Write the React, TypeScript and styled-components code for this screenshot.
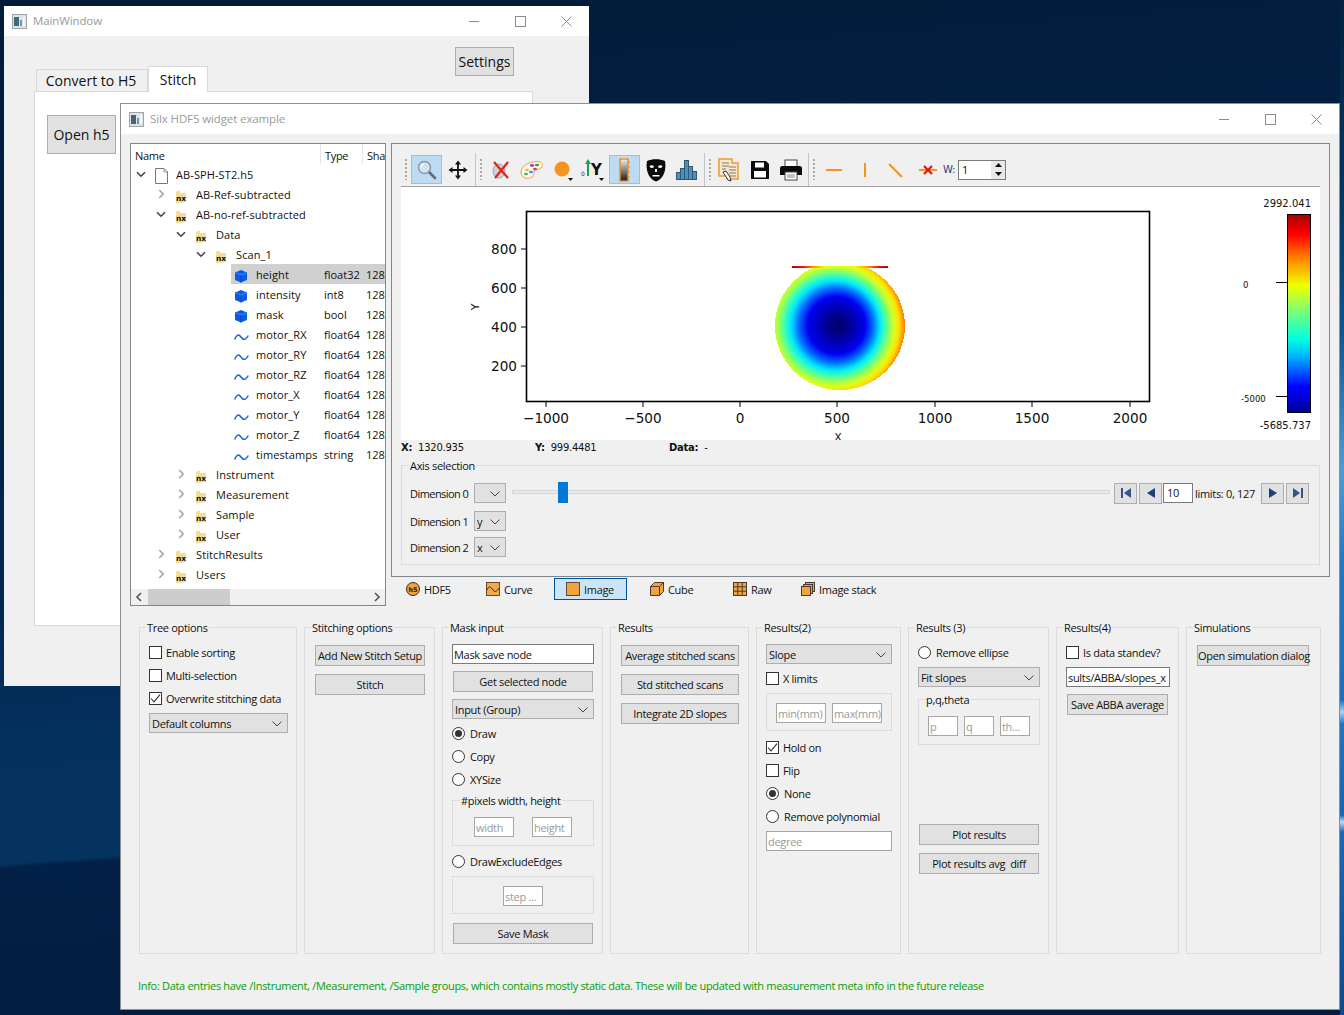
import React from 'react';
import styled, { createGlobalStyle } from 'styled-components';

const GlobalStyle = createGlobalStyle`
  html, body {
    margin: 0;
    padding: 0;
    width: 1344px;
    height: 1015px;
    overflow: hidden;
  }
  * {
    box-sizing: border-box;
  }
`;

const UI_FONT = '"Open Sans", "Noto Sans", sans-serif';

const Desktop = styled.div`
  position: relative;
  width: 1344px;
  height: 1015px;
  overflow: hidden;
  font-family: ${UI_FONT};
  font-size: 11px;
  letter-spacing: -0.31px;
  color: #111;
  background:
    linear-gradient(180deg, #03223f 0, #04345f 190px, #0b5590 330px, #4c9dd6 470px, #2278c6 560px, #1c6fc0 700px, #a8d2ee 712px, #1f74c4 724px, #1765b4 815px, #bcdcf2 822px, #1a68b6 832px, #0d4a8c 1015px) right top / 4px 100% no-repeat,
    linear-gradient(175.7deg, #021b3a 0, #03264e 600px, #04325f 760px, #053360 862px, #022146 866px, #011c3e 1112px);
`;

const MainWindow = styled.div`
  position: absolute;
  left: 4px;
  top: 6px;
  width: 585px;
  height: 680px;
  background: #f0f0f0;
`;

const ForeWindow = styled.div`
  position: absolute;
  left: 120px;
  top: 103px;
  width: 1220px;
  height: 907px;
  background: #f0f0f0;
  border: 1px solid #8a8f98;
`;

const TitleBar = styled.div`
  display: flex;
  align-items: center;
  height: 30px;
  background: #fff;
  padding-left: 8px;
  color: #9a9a9a;
  font-size: 11.5px;
  letter-spacing: -0.12px;
`;

const TitleText = styled.span`
  flex: 1;
  margin: -1px 0 0 6px;
`;

const WinButton = styled.div`
  display: flex;
  align-items: center;
  justify-content: center;
  width: 46px;
  height: 30px;
`;

const MainBody = styled.div`
  padding: 11px 56px 0 30px;
`;

const MainHeader = styled.div`
  display: flex;
  align-items: flex-end;
  justify-content: space-between;
  height: 45px;
  padding: 0 19px 0 2px;
`;

const Tabs = styled.div`
  display: flex;
  align-items: flex-end;
`;

const BigTab = styled.div<{ $w: number; $active?: boolean }>`
  width: ${(p) => p.$w}px;
  height: ${(p) => (p.$active ? '26px' : '23px')};
  padding-right: ${(p) => (p.$active ? 0 : '2px')};
  border: 1px solid #d9d9d9;
  border-bottom: ${(p) => (p.$active ? 'none' : '1px solid #d9d9d9')};
  background: ${(p) => (p.$active ? '#fff' : '#f0f0f0')};
  font-size: 14px;
  letter-spacing: 0;
  line-height: ${(p) => (p.$active ? '26px' : '21px')};
  text-align: center;
  color: #111;
  white-space: nowrap;
`;

const BigButton = styled.button<{ $tall?: boolean }>`
  height: ${(p) => (p.$tall ? '39px' : '29px')};
  width: ${(p) => (p.$tall ? '69px' : '59px')};
  padding: 0;
  align-self: ${(p) => (p.$tall ? 'auto' : 'flex-start')};
  border: 1px solid #adadad;
  background: #e1e1e1;
  font-family: ${UI_FONT};
  font-size: 14px;
  color: #111;
`;

const MainPane = styled.div`
  height: 535px;
  margin-top: -1px;
  padding: 23px 0 0 12px;
  background: #fff;
  border: 1px solid #d9d9d9;
`;

const ForeBody = styled.div`
  padding: 9px 0 0 9px;
`;

const TopRow = styled.div`
  display: flex;
  gap: 5px;
`;

const TreePanel = styled.div`
  position: relative;
  display: flex;
  flex-direction: column;
  width: 256px;
  height: 463px;
  background: #fff;
  border: 1px solid #82878f;
  overflow: hidden;
`;

const TreeHeader = styled.div`
  display: flex;
  height: 20px;
  flex: none;
`;

const HeadCell = styled.div<{ $w: number }>`
  flex: none;
  width: ${(p) => p.$w}px;
  padding-left: 4px;
  line-height: 23px;
  border-right: 1px solid #e5e5e5;
  white-space: nowrap;
  overflow: hidden;
`;

const TreeRows = styled.div`
  flex: 1;
  letter-spacing: 0.1px;
`;

const TreeRow = styled.div<{ $depth: number }>`
  display: flex;
  align-items: center;
  height: 20px;
  padding-left: ${(p) => 4 + p.$depth * 20}px;
  white-space: nowrap;
`;

const Expander = styled.div`
  display: flex;
  align-items: center;
  justify-content: center;
  width: 12px;
  height: 20px;
  flex: none;
`;

const RowIcon = styled.div<{ $drop: number }>`
  display: flex;
  align-items: center;
  justify-content: center;
  flex: none;
  width: 16px;
  margin-left: 6px;
  height: 20px;
  padding-top: ${(p) => p.$drop}px;
`;

const RowMain = styled.div<{ $selected?: boolean; $indent: number }>`
  display: flex;
  align-items: center;
  flex: none;
  height: 20px;
  width: ${(p) => p.$indent}px;
  background: ${(p) =>
    p.$selected ? 'linear-gradient(90deg, transparent 4px, #d0d0d0 4px)' : 'transparent'};
`;

const RowName = styled.span`
  margin-left: 7px;
`;

const LeafCells = styled.div<{ $selected?: boolean }>`
  display: flex;
  align-items: center;
  height: 20px;
  width: 61px;
  letter-spacing: 0;
  background: ${(p) => (p.$selected ? '#d0d0d0' : 'transparent')};
`;

const TypeCell = styled.span`
  width: 42px;
  flex: none;
`;

const TreeScroll = styled.div`
  display: flex;
  align-items: center;
  justify-content: space-between;
  flex: none;
  height: 16px;
  background: #f0f0f0;
  padding: 0 4px;
`;

const ScrollThumb = styled.div`
  position: absolute;
  left: 17px;
  bottom: 0;
  width: 82px;
  height: 16px;
  background: #cdcdcd;
`;

const RightColumn = styled.div`
  display: flex;
  flex-direction: column;
  width: 939px;
`;

const ViewPanel = styled.div`
  height: 434px;
  padding: 9px 9px 0;
  border: 1px solid #82878f;
`;

const Toolbar = styled.div`
  display: flex;
  height: 34px;
  border-bottom: 1px solid #a0a0a0;
`;

const ToolGroup = styled.div<{ $pad: number; $sep?: boolean }>`
  position: relative;
  display: flex;
  align-items: center;
  padding: 0 2px 0 ${(p) => p.$pad}px;
  border-right: ${(p) => (p.$sep ? '1px solid #c4c4c4' : 'none')};
  &::before {
    content: '';
    position: absolute;
    left: 4px;
    top: 6px;
    bottom: 6px;
    width: 2px;
    background: repeating-linear-gradient(180deg, #a8a8a8 0 2px, transparent 2px 4px);
  }
`;

const ToolButton = styled.div<{ $on?: boolean }>`
  display: flex;
  align-items: center;
  justify-content: center;
  flex: none;
  width: 31px;
  height: 29px;
  background: ${(p) => (p.$on ? '#bcdcf4' : 'transparent')};
  border: 1px solid ${(p) => (p.$on ? '#90c4ee' : 'transparent')};
`;

const WidthLabel = styled.span`
  width: 15px;
  color: #2a3f8a;
  font-family: "DejaVu Sans", sans-serif;
  font-size: 10px;
`;

const SpinBox = styled.div`
  display: flex;
  justify-content: space-between;
  align-items: stretch;
  width: 48px;
  height: 20px;
  padding-left: 3px;
  background: #fff;
  border: 1px solid #7a7a7a;
  line-height: 18px;
`;

const SpinArrows = styled.div`
  display: flex;
  flex-direction: column;
  width: 14px;
  background: #e8e8e8;
`;

const SpinArrow = styled.div`
  flex: 1;
  display: flex;
  align-items: center;
  justify-content: center;
`;

const PlotSvg = styled.svg`
  display: block;
  width: 919px;
  height: 253px;
  background: #fff;
  letter-spacing: 0;
`;

const StatusRow = styled.div`
  display: flex;
  height: 25px;
  align-items: flex-start;
  font-family: "DejaVu Sans", sans-serif;
  font-size: 10px;
  letter-spacing: -0.25px;
  line-height: 15px;
`;

const StatusItem = styled.div`
  width: 134px;
  white-space: pre;
  b {
    font-weight: 700;
  }
`;

const AxisBox = styled.div`
  position: relative;
  height: 100px;
  padding: 17px 9px 0 8px;
  border: 1px solid #dcdcdc;
`;

const GroupTitle = styled.span<{ $left?: number }>`
  position: absolute;
  left: ${(p) => p.$left ?? 6}px;
  top: -7px;
  padding: 0 1px;
  background: #f0f0f0;
  line-height: 14px;
  white-space: nowrap;
`;

const DimRow = styled.div<{ $mt?: number }>`
  display: flex;
  align-items: center;
  height: 20px;
  margin-top: ${(p) => p.$mt ?? 0}px;
`;

const DimLabel = styled.span`
  width: 64px;
  flex: none;
  letter-spacing: -0.55px;
  white-space: nowrap;
`;

const Select = styled.div<{ $w: number; $mt?: number }>`
  display: flex;
  align-items: center;
  justify-content: space-between;
  flex: none;
  width: ${(p) => p.$w}px;
  height: 20px;
  margin-top: ${(p) => p.$mt ?? 0}px;
  padding: 1px 5px 0 2px;
  background: #e1e1e1;
  border: 1px solid #adadad;
  line-height: 17px;
`;

const SliderTrack = styled.div`
  position: relative;
  flex: none;
  width: 598px;
  height: 4px;
  margin: -2px 0 0 6px;
  background: #e7eaea;
  border: 1px solid #d6d6d6;
`;

const SliderHandle = styled.div`
  position: absolute;
  left: 45px;
  top: -9px;
  width: 10px;
  height: 21px;
  background: #0078d7;
`;

const NavButton = styled.div<{ $ml?: number }>`
  display: flex;
  align-items: center;
  justify-content: center;
  flex: none;
  width: 23px;
  height: 21px;
  margin-left: ${(p) => p.$ml ?? 0}px;
  background: #e1e1e1;
  border: 1px solid #adadad;
`;

const NavField = styled.div`
  flex: none;
  width: 30px;
  height: 20px;
  margin-left: 1px;
  padding-left: 3px;
  background: #fff;
  border: 1px solid #7a7a7a;
  line-height: 18px;
`;

const LimitsText = styled.span`
  flex: none;
  width: 66px;
  padding-left: 2px;
  white-space: nowrap;
`;

const ViewTabs = styled.div`
  display: flex;
  align-items: center;
  height: 22px;
  margin-top: 1px;
`;

const ViewTab = styled.div<{ $w: number; $on?: boolean; $pad: number }>`
  display: flex;
  align-items: center;
  flex: none;
  gap: 4px;
  width: ${(p) => p.$w}px;
  height: 22px;
  padding-left: ${(p) => p.$pad}px;
  background: ${(p) => (p.$on ? '#cce4f7' : 'transparent')};
  border: 1px solid ${(p) => (p.$on ? '#005499' : 'transparent')};
`;

const GroupsRow = styled.div`
  display: flex;
  gap: 7px;
  margin: 21px 0 0 9px;
`;

const Group = styled.div<{ $w: number; $pad?: number }>`
  position: relative;
  display: flex;
  flex-direction: column;
  align-items: flex-start;
  flex: none;
  width: ${(p) => p.$w}px;
  height: 327px;
  padding: 14px 0 0 ${(p) => p.$pad ?? 9}px;
  border: 1px solid #dcdcdc;
`;

const SubGroup = styled.div<{ $w: number; $h: number; $mt?: number; $pt?: number; $pl?: number; $gap?: number }>`
  position: relative;
  display: flex;
  flex: none;
  gap: ${(p) => p.$gap ?? 0}px;
  width: ${(p) => p.$w}px;
  height: ${(p) => p.$h}px;
  margin-top: ${(p) => p.$mt ?? 0}px;
  padding: ${(p) => p.$pt ?? 9}px 0 0 ${(p) => p.$pl ?? 9}px;
  border: 1px solid #dcdcdc;
`;

const OptionRow = styled.div<{ $mt?: number }>`
  display: flex;
  align-items: center;
  flex: none;
  gap: 4px;
  height: 23px;
  padding-bottom: 2px;
  margin-top: ${(p) => p.$mt ?? 0}px;
  white-space: nowrap;
`;

const CheckBox = styled.div`
  display: flex;
  align-items: center;
  justify-content: center;
  flex: none;
  width: 13px;
  height: 13px;
  background: #fff;
  border: 1px solid #333;
`;

const Radio = styled.div<{ $on?: boolean }>`
  position: relative;
  flex: none;
  width: 13px;
  height: 13px;
  margin-right: 1px;
  background: #fff;
  border: 1px solid #333;
  border-radius: 50%;
  &::after {
    content: '';
    display: ${(p) => (p.$on ? 'block' : 'none')};
    position: absolute;
    left: 2px;
    top: 2px;
    width: 7px;
    height: 7px;
    border-radius: 50%;
    background: #333;
  }
`;

const PushButton = styled.button<{ $w: number; $mt?: number; $ml?: number }>`
  flex: none;
  width: ${(p) => p.$w}px;
  height: 21px;
  margin-top: ${(p) => p.$mt ?? 3}px;
  margin-left: ${(p) => p.$ml ?? 0}px;
  padding: 0;
  background: #e1e1e1;
  border: 1px solid #adadad;
  font-family: ${UI_FONT};
  font-size: 11px;
  letter-spacing: -0.31px;
  color: #111;
  white-space: pre;
`;

const Field = styled.div<{ $w: number; $mt?: number; $hint?: boolean }>`
  flex: none;
  width: ${(p) => p.$w}px;
  height: 20px;
  margin-top: ${(p) => p.$mt ?? 0}px;
  padding: 1px 0 0 1px;
  background: #fff;
  border: 1px solid ${(p) => (p.$hint ? '#a6a6a6' : '#7a7a7a')};
  color: ${(p) => (p.$hint ? '#9a9a9a' : '#111')};
  line-height: 17px;
  white-space: nowrap;
  overflow: hidden;
`;

const InfoLine = styled.div`
  margin: 25px 0 0 8px;
  color: #00a000;
  line-height: 14px;
  white-space: nowrap;
`;

/* ---------- icons ---------- */

const WindowIcon = () => (
  <svg width="15" height="15" viewBox="0 0 15 15">
    <rect x="0.5" y="0.5" width="14" height="14" fill="#dfe3e6" stroke="#a0a4a8" />
    <rect x="2" y="3" width="5" height="9" fill="#3c6a78" />
    <rect x="8" y="6" width="2" height="6" fill="#6f9aa6" />
    <rect x="11" y="3" width="2" height="9" fill="#f4f6f7" />
  </svg>
);

const WinMin = () => (
  <svg width="11" height="11" viewBox="0 0 11 11">
    <path d="M0 5.5H10" stroke="#8c8c8c" />
  </svg>
);
const WinMax = () => (
  <svg width="11" height="11" viewBox="0 0 11 11">
    <rect x="0.5" y="0.5" width="10" height="10" fill="none" stroke="#8c8c8c" />
  </svg>
);
const WinClose = () => (
  <svg width="11" height="11" viewBox="0 0 11 11">
    <path d="M0.5 0.5L10.5 10.5M10.5 0.5L0.5 10.5" stroke="#8c8c8c" />
  </svg>
);

const ChevronDown = ({ color = '#444' }: { color?: string }) => (
  <svg width="10" height="7" viewBox="0 0 10 7">
    <path d="M1 1.2L5 5.2L9 1.2" fill="none" stroke={color} strokeWidth="1.6" />
  </svg>
);

const ChevronRight = () => (
  <svg width="7" height="10" viewBox="0 0 7 10">
    <path d="M1.2 1L5.2 5L1.2 9" fill="none" stroke="#a6a6a6" strokeWidth="1.6" />
  </svg>
);

const SelectArrow = () => (
  <svg width="10" height="6" viewBox="0 0 10 6">
    <path d="M0.5 0.5L5 5L9.5 0.5" fill="none" stroke="#444" />
  </svg>
);

const FileIcon = () => (
  <svg width="13" height="16" viewBox="0 0 13 16">
    <path d="M0.5 0.5H9L12.5 4V15.5H0.5Z" fill="#fff" stroke="#777" />
    <path d="M9 0.5V4H12.5" fill="none" stroke="#999" />
  </svg>
);

const NxFolder = () => (
  <svg width="12" height="14" viewBox="0 0 12 14">
    <path d="M1 1.5L5 0.5V3H11V12L1 13.5Z" fill="#f7dd91" />
    <text x="1" y="10.5" fontFamily="'DejaVu Sans', sans-serif" fontSize="7.5" fontWeight="700" fill="#111" letterSpacing="0">nx</text>
  </svg>
);

const CubeNode = () => (
  <svg width="14" height="14" viewBox="0 0 14 14">
    <path d="M1 3.5L7 1L13 3.5V11L7 13.5L1 11Z" fill="#0a5ce6" />
    <path d="M1 3.5L7 6L13 3.5" fill="none" stroke="#3f8cf5" />
    <path d="M7 6V13.5" stroke="#0848b8" />
  </svg>
);

const WaveNode = () => (
  <svg width="15" height="10" viewBox="0 0 15 10">
    <path d="M0.7 7.5C2.5 2.5 4.8 1.8 7 5C9 8 11.5 8.8 14.3 3.5" fill="none" stroke="#1560ee" strokeWidth="1.4" />
  </svg>
);

const TickMark = () => (
  <svg width="11" height="11" viewBox="0 0 11 11">
    <path d="M1 5.5L4 8.8L10 1.6" fill="none" stroke="#333" strokeWidth="1.1" />
  </svg>
);

const ZoomIcon = () => (
  <svg width="22" height="22" viewBox="0 0 22 22">
    <path d="M12.5 12.5L19 19" stroke="#6a6a6a" strokeWidth="2.6" strokeLinecap="round" />
    <circle cx="8.5" cy="8.5" r="6" fill="#cfe4f5" stroke="#8a96a4" strokeWidth="1.5" />
    <path d="M5 8A4 4 0 0 1 8 5" fill="none" stroke="#fff" strokeWidth="1.3" />
  </svg>
);

const PanIcon = () => (
  <svg width="20" height="20" viewBox="0 0 20 20">
    <path d="M10 2V18M2 10H18" stroke="#111" strokeWidth="1.8" />
    <path d="M10 0.5L13 4.5H7ZM10 19.5L7 15.5H13ZM0.5 10L4.5 7V13ZM19.5 10L15.5 13V7Z" fill="#111" />
  </svg>
);

const ClearIcon = () => (
  <svg width="20" height="20" viewBox="0 0 20 20">
    <ellipse cx="8" cy="11" rx="6" ry="7" fill="#c6d2dc" stroke="#9aa6b0" />
    <path d="M3 2L17 18M17 2L4 18" stroke="#e2231a" strokeWidth="2.2" />
  </svg>
);

const PaletteIcon = () => (
  <svg width="24" height="20" viewBox="0 0 24 20">
    <path d="M1 12C1 6 9 2 16 1.5C22 1 24 5 21 8C19 10 15 9 14 11C13 13 15 15 12 17C8 20 1 18 1 12Z" fill="#fff8ec" stroke="#f0a040" />
    <ellipse cx="7" cy="10" rx="2" ry="1.2" fill="#e8c020" />
    <ellipse cx="12" cy="5.5" rx="2.2" ry="1.2" fill="#8a30c0" />
    <ellipse cx="17" cy="5" rx="2.2" ry="1.2" fill="#30a040" />
    <ellipse cx="6" cy="14" rx="2" ry="1.2" fill="#30c060" />
    <ellipse cx="11" cy="12" rx="2" ry="1.2" fill="#20a0e0" />
    <ellipse cx="15" cy="9" rx="2" ry="1.2" fill="#e83080" />
  </svg>
);

const MarkerIcon = () => (
  <svg width="24" height="24" viewBox="0 0 24 24">
    <circle cx="11" cy="11" r="7.5" fill="#f7931e" />
    <path d="M17 20H22L19.5 23Z" fill="#111" />
  </svg>
);

const YAxisIcon = () => (
  <svg width="26" height="24" viewBox="0 0 26 24">
    <path d="M7 18V5" stroke="#2a9a4a" strokeWidth="2" />
    <path d="M7 1L10 6H4Z" fill="#2a9a4a" />
    <text x="0" y="18" fontFamily="'DejaVu Sans', sans-serif" fontSize="6" fill="#333" letterSpacing="0">0</text>
    <text x="10" y="17" fontFamily="'DejaVu Sans', sans-serif" fontSize="15" fontWeight="700" fill="#111" letterSpacing="0">Y</text>
    <path d="M18 20H23L20.5 23Z" fill="#111" />
  </svg>
);

const ColorbarIcon = () => (
  <svg width="14" height="24" viewBox="0 0 14 24">
    <defs>
      <linearGradient id="toolbarBar" x1="0" y1="0" x2="0" y2="1">
        <stop offset="0" stopColor="#f4f0e8" />
        <stop offset="1" stopColor="#1a1a1a" />
      </linearGradient>
    </defs>
    <rect x="2" y="1" width="8" height="22" fill="url(#toolbarBar)" stroke="#f08a20" strokeWidth="1.4" />
    <path d="M10 4H12M10 9H12M10 14H12M10 19H12" stroke="#f08a20" />
  </svg>
);

const MaskIcon = () => (
  <svg width="20" height="24" viewBox="0 0 20 24">
    <path d="M1 3C6 0.5 14 0.5 19 3C20.5 11 18 21 10 23.5C2 21 -0.5 11 1 3Z" fill="#0a0a0a" />
    <path d="M3.5 8C5 6.5 7.5 7 8 9C6.5 10.5 4.5 10.5 3.5 8ZM16.5 8C15 6.5 12.5 7 12 9C13.5 10.5 15.5 10.5 16.5 8Z" fill="#fff" />
    <path d="M6.5 17H13.5V18.5H6.5ZM9 11H11V14H9Z" fill="#fff" />
  </svg>
);

const HistogramIcon = () => (
  <svg width="22" height="20" viewBox="0 0 22 20">
    <g fill="#4a90c4" stroke="#34556e">
      <rect x="0.5" y="12.5" width="4" height="7" />
      <rect x="4.5" y="8.5" width="4" height="11" />
      <rect x="8.5" y="0.5" width="4" height="19" />
      <rect x="12.5" y="6.5" width="4" height="13" />
      <rect x="16.5" y="11.5" width="4" height="8" />
    </g>
  </svg>
);

const CopyIcon = () => (
  <svg width="22" height="24" viewBox="0 0 22 24">
    <path d="M1 1H14V5H20V21H9V18H1Z" fill="#f8e7c8" stroke="#ee9a30" strokeWidth="1.5" />
    <path d="M4 5H11M4 8H11M4 11H8M11 9H18M11 12H18M11 15H18M11 18H18" stroke="#7a7a7a" />
    <path d="M5 14L10 22L13 23L12 19L8 13Z" fill="#fff" stroke="#333" />
  </svg>
);

const SaveIcon = () => (
  <svg width="18" height="18" viewBox="0 0 18 18">
    <path d="M0 0H15L18 3V18H0Z" fill="#0a0a0a" />
    <rect x="4" y="1.5" width="9" height="5" fill="#fff" />
    <rect x="3" y="10" width="12" height="6.5" fill="#fff" />
  </svg>
);

const PrintIcon = () => (
  <svg width="22" height="22" viewBox="0 0 22 22">
    <rect x="5" y="1" width="12" height="7" fill="#fff" stroke="#444" />
    <path d="M2 7H20C21 7 22 8 22 9V16H0V9C0 8 1 7 2 7Z" fill="#0a0a0a" />
    <rect x="5" y="13" width="12" height="8" fill="#fff" stroke="#444" />
    <path d="M7 16H15M7 18H15" stroke="#888" />
  </svg>
);

const LineIcon = ({ d }: { d: string }) => (
  <svg width="20" height="20" viewBox="0 0 20 20">
    <path d={d} fill="none" stroke="#f7931e" strokeWidth="2" />
  </svg>
);

const CrossLineIcon = () => (
  <svg width="20" height="20" viewBox="0 0 20 20">
    <path d="M1 10H19" stroke="#f7931e" strokeWidth="2" />
    <path d="M6 6L14 14M14 6L6 14" stroke="#e81010" strokeWidth="2.2" />
  </svg>
);

const NavIcon = ({ d, color = '#1f3a6e' }: { d: string; color?: string }) => (
  <svg width="12" height="12" viewBox="0 0 12 12">
    <path d={d} fill={color} />
  </svg>
);

const H5Icon = () => (
  <svg width="14" height="14" viewBox="0 0 14 14">
    <circle cx="7" cy="7" r="6.5" fill="#f2a23c" stroke="#3a2a1a" />
    <text x="7" y="9.6" textAnchor="middle" fontFamily="'DejaVu Sans', sans-serif" fontSize="6.5" fontWeight="700" fill="#2a1a0a" letterSpacing="0">h5</text>
  </svg>
);

const CurveIcon = () => (
  <svg width="14" height="14" viewBox="0 0 14 14">
    <rect x="0.5" y="0.5" width="13" height="13" fill="#f2a94e" stroke="#6a4a2a" />
    <path d="M1 8C3 3 5 5 7 8C9 11 11 9 13 6" fill="none" stroke="#3a2a1a" />
  </svg>
);

const ImageIcon = () => (
  <svg width="14" height="14" viewBox="0 0 14 14">
    <rect x="0.5" y="0.5" width="13" height="13" fill="#f2a340" stroke="#5a4a3a" />
  </svg>
);

const CubeIcon = () => (
  <svg width="14" height="14" viewBox="0 0 14 14">
    <path d="M0.5 4.5L4.5 0.5H13.5V9.5L9.5 13.5H0.5Z" fill="#f2a340" stroke="#4a3a2a" />
    <path d="M0.5 4.5H9.5V13.5M9.5 4.5L13.5 0.5" fill="none" stroke="#4a3a2a" />
  </svg>
);

const RawIcon = () => (
  <svg width="14" height="14" viewBox="0 0 14 14">
    <rect x="0.5" y="0.5" width="13" height="13" fill="#f2a340" stroke="#4a3a2a" />
    <path d="M4.8 0.5V13.5M9.2 0.5V13.5M0.5 4.8H13.5M0.5 9.2H13.5" stroke="#4a3a2a" />
  </svg>
);

const StackIcon = () => (
  <svg width="14" height="14" viewBox="0 0 14 14">
    <rect x="4.5" y="0.5" width="9" height="9" fill="#f2a340" stroke="#4a3a2a" />
    <rect x="2.5" y="2.5" width="9" height="9" fill="#f2a340" stroke="#4a3a2a" />
    <rect x="0.5" y="4.5" width="9" height="9" fill="#f2a340" stroke="#4a3a2a" />
  </svg>
);

/* ---------- plot ---------- */

const PLOT_FONT = "'DejaVu Sans', sans-serif";

const X_TICKS: [number, string][] = [
  [546, '\u22121000'],
  [643, '\u2212500'],
  [740, '0'],
  [837, '500'],
  [935, '1000'],
  [1032, '1500'],
  [1130, '2000'],
];

const Y_TICKS: [number, string][] = [
  [249, '800'],
  [288, '600'],
  [327, '400'],
  [366, '200'],
];

const Plot = () => (
  <PlotSvg viewBox="401 187 919 253">
    <defs>
      <radialGradient id="disc" gradientUnits="userSpaceOnUse" cx="833" cy="326" r="72" fx="839" fy="325">
        <stop offset="0" stopColor="#00006a" />
        <stop offset="0.14" stopColor="#00008c" />
        <stop offset="0.4" stopColor="#0000f0" />
        <stop offset="0.52" stopColor="#0070ff" />
        <stop offset="0.62" stopColor="#00e8ff" />
        <stop offset="0.7" stopColor="#40ffb0" />
        <stop offset="0.78" stopColor="#a0ff50" />
        <stop offset="0.84" stopColor="#d8ff20" />
        <stop offset="0.91" stopColor="#ffe000" />
        <stop offset="1" stopColor="#ff7800" />
      </radialGradient>
      <linearGradient id="topEdge" x1="0" y1="0" x2="1" y2="0">
        <stop offset="0" stopColor="#c00000" />
        <stop offset="0.12" stopColor="#ff1000" />
        <stop offset="0.22" stopColor="#ff9000" />
        <stop offset="0.35" stopColor="#f0ff00" />
        <stop offset="0.65" stopColor="#f0ff00" />
        <stop offset="0.8" stopColor="#ff9000" />
        <stop offset="0.9" stopColor="#ff1000" />
        <stop offset="1" stopColor="#c00000" />
      </linearGradient>
      <linearGradient id="jet" x1="0" y1="0" x2="0" y2="1">
        <stop offset="0" stopColor="#a80000" />
        <stop offset="0.1" stopColor="#ff0000" />
        <stop offset="0.23" stopColor="#ff8c00" />
        <stop offset="0.36" stopColor="#f0ff00" />
        <stop offset="0.5" stopColor="#70ff80" />
        <stop offset="0.63" stopColor="#00ffe0" />
        <stop offset="0.72" stopColor="#00b0ff" />
        <stop offset="0.87" stopColor="#0000ff" />
        <stop offset="1" stopColor="#00009a" />
      </linearGradient>
      <clipPath id="discClip">
        <rect x="760" y="266" width="160" height="130" />
      </clipPath>
    </defs>
    <rect x="526.5" y="211.5" width="623" height="190" fill="#fff" stroke="#000" strokeWidth="1.6" />
    <ellipse cx="840" cy="326" rx="65" ry="64" fill="url(#disc)" clipPath="url(#discClip)" shapeRendering="crispEdges" />
    <rect x="792" y="266" width="96" height="2" fill="url(#topEdge)" />
    {X_TICKS.map(([x, label]) => (
      <g key={label}>
        <path d={`M${x} 402V407`} stroke="#000" />
        <text x={x} y="423" textAnchor="middle" fontFamily={PLOT_FONT} fontSize="13.6" fill="#111">{label}</text>
      </g>
    ))}
    {Y_TICKS.map(([y, label]) => (
      <g key={label}>
        <path d={`M521 ${y}H526`} stroke="#000" />
        <text x="517" y={y + 5} textAnchor="end" fontFamily={PLOT_FONT} fontSize="13.6" fill="#111">{label}</text>
      </g>
    ))}
    <text x="0" y="0" transform="translate(479 307) rotate(-90)" textAnchor="middle" fontFamily={PLOT_FONT} fontSize="11" fill="#111">Y</text>
    <text x="838" y="441" textAnchor="middle" fontFamily={PLOT_FONT} fontSize="11" fill="#111">X</text>
    <text x="1311" y="207" textAnchor="end" fontFamily={PLOT_FONT} fontSize="10" fill="#111">2992.041</text>
    <rect x="1287.5" y="214.5" width="23" height="198" fill="url(#jet)" stroke="#000" />
    <path d="M1276 282.5H1287M1276 396.5H1287" stroke="#000" />
    <text x="1243" y="288" fontFamily={PLOT_FONT} fontSize="8.5" fill="#111">0</text>
    <text x="1241" y="402" fontFamily={PLOT_FONT} fontSize="8.5" fill="#111">-5000</text>
    <text x="1311" y="429" textAnchor="end" fontFamily={PLOT_FONT} fontSize="10" fill="#111">-5685.737</text>
  </PlotSvg>
);

/* ---------- data ---------- */

type NodeKind = 'file' | 'nx' | 'cube' | 'wave';

interface TreeNode {
  name: string;
  depth: number;
  kind: NodeKind;
  open?: boolean;
  closed?: boolean;
  type?: string;
  selected?: boolean;
}

const NODES: TreeNode[] = [
  { name: 'AB-SPH-ST2.h5', depth: 0, kind: 'file', open: true },
  { name: 'AB-Ref-subtracted', depth: 1, kind: 'nx', closed: true },
  { name: 'AB-no-ref-subtracted', depth: 1, kind: 'nx', open: true },
  { name: 'Data', depth: 2, kind: 'nx', open: true },
  { name: 'Scan_1', depth: 3, kind: 'nx', open: true },
  { name: 'height', depth: 4, kind: 'cube', type: 'float32', selected: true },
  { name: 'intensity', depth: 4, kind: 'cube', type: 'int8' },
  { name: 'mask', depth: 4, kind: 'cube', type: 'bool' },
  { name: 'motor_RX', depth: 4, kind: 'wave', type: 'float64' },
  { name: 'motor_RY', depth: 4, kind: 'wave', type: 'float64' },
  { name: 'motor_RZ', depth: 4, kind: 'wave', type: 'float64' },
  { name: 'motor_X', depth: 4, kind: 'wave', type: 'float64' },
  { name: 'motor_Y', depth: 4, kind: 'wave', type: 'float64' },
  { name: 'motor_Z', depth: 4, kind: 'wave', type: 'float64' },
  { name: 'timestamps', depth: 4, kind: 'wave', type: 'string' },
  { name: 'Instrument', depth: 2, kind: 'nx', closed: true },
  { name: 'Measurement', depth: 2, kind: 'nx', closed: true },
  { name: 'Sample', depth: 2, kind: 'nx', closed: true },
  { name: 'User', depth: 2, kind: 'nx', closed: true },
  { name: 'StitchResults', depth: 1, kind: 'nx', closed: true },
  { name: 'Users', depth: 1, kind: 'nx', closed: true },
];

const NODE_ICONS: Record<NodeKind, React.ReactNode> = {
  file: <FileIcon />,
  nx: <NxFolder />,
  cube: <CubeNode />,
  wave: <WaveNode />,
};

const ICON_DROP: Record<NodeKind, number> = { file: 3, nx: 6, cube: 4, wave: 6 };

const TreeItem = ({ node }: { node: TreeNode }) => {
  const nameWidth = 254 - 4 - node.depth * 20 - 12 - 61;
  return (
    <TreeRow $depth={node.depth}>
      <Expander>
        {node.open && <ChevronDown />}
        {node.closed && <ChevronRight />}
      </Expander>
      <RowMain $indent={nameWidth} $selected={node.selected}>
        <RowIcon $drop={ICON_DROP[node.kind]}>{NODE_ICONS[node.kind]}</RowIcon>
        <RowName>{node.name}</RowName>
      </RowMain>
      {node.type && (
        <LeafCells $selected={node.selected}>
          <TypeCell>{node.type}</TypeCell>
          <span>128</span>
        </LeafCells>
      )}
    </TreeRow>
  );
};

const Check = ({ label, on, mt }: { label: string; on?: boolean; mt?: number }) => (
  <OptionRow $mt={mt}>
    <CheckBox>{on && <TickMark />}</CheckBox>
    {label}
  </OptionRow>
);

const RadioOption = ({ label, on, mt }: { label: string; on?: boolean; mt?: number }) => (
  <OptionRow $mt={mt}>
    <Radio $on={on} />
    {label}
  </OptionRow>
);

const Combo = ({ label, w, mt }: { label: string; w: number; mt?: number }) => (
  <Select $w={w} $mt={mt}>
    {label}
    <SelectArrow />
  </Select>
);

const WindowButtons = () => (
  <>
    <WinButton><WinMin /></WinButton>
    <WinButton><WinMax /></WinButton>
    <WinButton><WinClose /></WinButton>
  </>
);

const App = () => (
  <Desktop>
    <GlobalStyle />
    <MainWindow>
      <TitleBar>
        <WindowIcon />
        <TitleText>MainWindow</TitleText>
        <WindowButtons />
      </TitleBar>
      <MainBody>
        <MainHeader>
          <Tabs>
            <BigTab $w={112}>Convert to H5</BigTab>
            <BigTab $w={60} $active>Stitch</BigTab>
          </Tabs>
          <BigButton>Settings</BigButton>
        </MainHeader>
        <MainPane>
          <BigButton $tall>Open h5</BigButton>
        </MainPane>
      </MainBody>
    </MainWindow>

    <ForeWindow>
      <TitleBar>
        <WindowIcon />
        <TitleText>Silx HDF5 widget example</TitleText>
        <WindowButtons />
      </TitleBar>
      <ForeBody>
        <TopRow>
          <TreePanel>
            <TreeHeader>
              <HeadCell $w={190}>Name</HeadCell>
              <HeadCell $w={42}>Type</HeadCell>
              <HeadCell $w={30}>Sha</HeadCell>
            </TreeHeader>
            <TreeRows>
              {NODES.map((node) => (
                <TreeItem key={node.name} node={node} />
              ))}
            </TreeRows>
            <TreeScroll>
              <svg width="8" height="10" viewBox="0 0 8 10">
                <path d="M6 1L2 5L6 9" fill="none" stroke="#555" strokeWidth="1.6" />
              </svg>
              <ScrollThumb />
              <svg width="8" height="10" viewBox="0 0 8 10">
                <path d="M2 1L6 5L2 9" fill="none" stroke="#555" strokeWidth="1.6" />
              </svg>
            </TreeScroll>
          </TreePanel>

          <RightColumn>
            <ViewPanel>
              <Toolbar>
                <ToolGroup $pad={10} $sep>
                  <ToolButton $on><ZoomIcon /></ToolButton>
                  <ToolButton><PanIcon /></ToolButton>
                </ToolGroup>
                <ToolGroup $pad={9} $sep>
                  <ToolButton><ClearIcon /></ToolButton>
                  <ToolButton><PaletteIcon /></ToolButton>
                  <ToolButton><MarkerIcon /></ToolButton>
                  <ToolButton><YAxisIcon /></ToolButton>
                  <ToolButton $on><ColorbarIcon /></ToolButton>
                  <ToolButton><MaskIcon /></ToolButton>
                  <ToolButton><HistogramIcon /></ToolButton>
                </ToolGroup>
                <ToolGroup $pad={8} $sep>
                  <ToolButton><CopyIcon /></ToolButton>
                  <ToolButton><SaveIcon /></ToolButton>
                  <ToolButton><PrintIcon /></ToolButton>
                </ToolGroup>
                <ToolGroup $pad={10}>
                  <ToolButton><LineIcon d="M1 10H17" /></ToolButton>
                  <ToolButton><LineIcon d="M9 3V17" /></ToolButton>
                  <ToolButton><LineIcon d="M2 4L15 17" /></ToolButton>
                  <ToolButton><CrossLineIcon /></ToolButton>
                  <WidthLabel>W:</WidthLabel>
                  <SpinBox>
                    1
                    <SpinArrows>
                      <SpinArrow>
                        <svg width="7" height="4" viewBox="0 0 7 4"><path d="M3.5 0L7 4H0Z" fill="#111" /></svg>
                      </SpinArrow>
                      <SpinArrow>
                        <svg width="7" height="4" viewBox="0 0 7 4"><path d="M3.5 4L0 0H7Z" fill="#111" /></svg>
                      </SpinArrow>
                    </SpinArrows>
                  </SpinBox>
                </ToolGroup>
              </Toolbar>
              <Plot />
              <StatusRow>
                <StatusItem><b>X:</b>  1320.935</StatusItem>
                <StatusItem><b>Y:</b>  999.4481</StatusItem>
                <StatusItem><b>Data:</b>  -</StatusItem>
              </StatusRow>
              <AxisBox>
                <GroupTitle $left={7}>Axis selection</GroupTitle>
                <DimRow>
                  <DimLabel>Dimension 0</DimLabel>
                  <Select $w={32}>
                    <span />
                    <SelectArrow />
                  </Select>
                  <SliderTrack>
                    <SliderHandle />
                  </SliderTrack>
                  <NavButton $ml={4}>
                    <NavIcon d="M1 1H3V11H1ZM11 1V11L4 6Z" color="#33528e" />
                  </NavButton>
                  <NavButton $ml={2}>
                    <NavIcon d="M10 1V11L2 6Z" color="#1d3f80" />
                  </NavButton>
                  <NavField>10</NavField>
                  <LimitsText>limits: 0, 127</LimitsText>
                  <NavButton $ml={2}>
                    <NavIcon d="M2 1V11L10 6Z" color="#1d3f80" />
                  </NavButton>
                  <NavButton $ml={2}>
                    <NavIcon d="M1 1V11L8 6ZM9 1H11V11H9Z" color="#33528e" />
                  </NavButton>
                </DimRow>
                <DimRow $mt={8}>
                  <DimLabel>Dimension 1</DimLabel>
                  <Select $w={32}>
                    y
                    <SelectArrow />
                  </Select>
                </DimRow>
                <DimRow $mt={6}>
                  <DimLabel>Dimension 2</DimLabel>
                  <Select $w={32}>
                    x
                    <SelectArrow />
                  </Select>
                </DimRow>
              </AxisBox>
            </ViewPanel>
            <ViewTabs>
              <ViewTab $w={94} $pad={14}><H5Icon />HDF5</ViewTab>
              <ViewTab $w={69} $pad={0}><CurveIcon />Curve</ViewTab>
              <ViewTab $w={73} $on $pad={11}><ImageIcon />Image</ViewTab>
              <ViewTab $w={83} $pad={22}><CubeIcon />Cube</ViewTab>
              <ViewTab $w={90} $pad={22}><RawIcon />Raw</ViewTab>
              <ViewTab $w={120} $pad={0}><StackIcon />Image stack</ViewTab>
            </ViewTabs>
          </RightColumn>
        </TopRow>

        <GroupsRow>
          <Group $w={158}>
            <GroupTitle>Tree options</GroupTitle>
            <Check label="Enable sorting" />
            <Check label="Multi-selection" />
            <Check label="Overwrite stitching data" on />
            <Combo label="Default columns" w={139} mt={2} />
          </Group>

          <Group $w={131} $pad={10}>
            <GroupTitle>Stitching options</GroupTitle>
            <PushButton $w={110}>Add New Stitch Setup</PushButton>
            <PushButton $w={110} $mt={8}>Stitch</PushButton>
          </Group>

          <Group $w={161}>
            <GroupTitle>Mask input</GroupTitle>
            <Field $w={142} $mt={2}>Mask save node</Field>
            <PushButton $w={140} $ml={1} $mt={7}>Get selected node</PushButton>
            <Combo label="Input (Group)" w={142} mt={7} />
            <RadioOption label="Draw" on mt={4} />
            <RadioOption label="Copy" />
            <RadioOption label="XYSize" />
            <SubGroup $w={142} $h={46} $mt={8} $pt={16} $pl={21} $gap={18}>
              <GroupTitle $left={7}>#pixels width, height</GroupTitle>
              <Field $w={40} $hint>width</Field>
              <Field $w={40} $hint>height</Field>
            </SubGroup>
            <RadioOption label="DrawExcludeEdges" mt={5} />
            <SubGroup $w={142} $h={38} $mt={2} $pl={50}>
              <Field $w={40} $hint>step ...</Field>
            </SubGroup>
            <PushButton $w={140} $ml={1} $mt={9}>Save Mask</PushButton>
          </Group>

          <Group $w={139} $pad={10}>
            <GroupTitle>Results</GroupTitle>
            <PushButton $w={118}>Average stitched scans</PushButton>
            <PushButton $w={118} $mt={8}>Std stitched scans</PushButton>
            <PushButton $w={118} $mt={8}>Integrate 2D slopes</PushButton>
          </Group>

          <Group $w={145}>
            <GroupTitle>Results(2)</GroupTitle>
            <Combo label="Slope" w={126} mt={2} />
            <Check label="X limits" mt={4} />
            <SubGroup $w={126} $h={38} $mt={2} $gap={6}>
              <Field $w={50} $hint>min(mm)</Field>
              <Field $w={50} $hint>max(mm)</Field>
            </SubGroup>
            <Check label="Hold on" on mt={6} />
            <Check label="Flip" />
            <RadioOption label="None" on />
            <RadioOption label="Remove polynomial" />
            <Field $w={126} $hint $mt={2}>degree</Field>
          </Group>

          <Group $w={141}>
            <GroupTitle>Results (3)</GroupTitle>
            <RadioOption label="Remove ellipse" />
            <Combo label="Fit slopes" w={122} mt={2} />
            <SubGroup $w={122} $h={46} $mt={12} $pt={16} $gap={6}>
              <GroupTitle>p,q,theta</GroupTitle>
              <Field $w={30} $hint>p</Field>
              <Field $w={30} $hint>q</Field>
              <Field $w={30} $hint>th...</Field>
            </SubGroup>
            <PushButton $w={120} $ml={1} $mt={79}>Plot results</PushButton>
            <PushButton $w={120} $ml={1} $mt={8}>Plot results avg  diff</PushButton>
          </Group>

          <Group $w={123}>
            <GroupTitle>Results(4)</GroupTitle>
            <Check label="Is data standev?" />
            <Field $w={104} $mt={2}>sults/ABBA/slopes_x</Field>
            <PushButton $w={101} $ml={1} $mt={7}>Save ABBA average</PushButton>
          </Group>

          <Group $w={135} $pad={10}>
            <GroupTitle>Simulations</GroupTitle>
            <PushButton $w={112}>Open simulation dialog</PushButton>
          </Group>
        </GroupsRow>

        <InfoLine>
          Info: Data entries have /Instrument, /Measurement, /Sample groups, which contains mostly static data. These will be updated with measurement meta info in the future release
        </InfoLine>
      </ForeBody>
    </ForeWindow>
  </Desktop>
);

export default App;
